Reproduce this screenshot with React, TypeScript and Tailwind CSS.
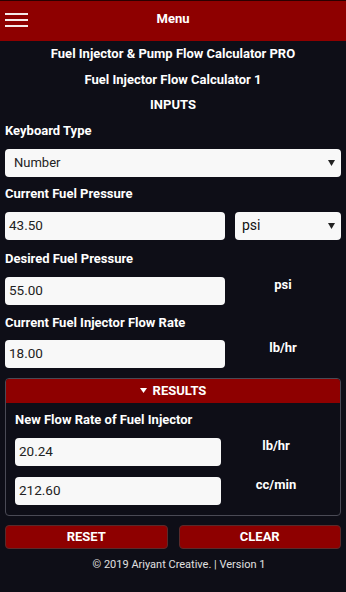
import React from 'react';

const font = { fontFamily: 'Roboto, "Liberation Sans", sans-serif' };

function Caret() {
  return (
    <svg width="7" height="6" viewBox="0 0 7 6" className="shrink-0">
      <path d="M0 0 L7 0 L3.5 6 Z" fill="#222" />
    </svg>
  );
}

function Field({ value, className = '' }: { value: string; className?: string }) {
  return (
    <div className={`flex h-[28px] items-center rounded-[4px] bg-[#f8f8f8] px-[4px] text-[13.5px] text-[#222] ${className}`}>
      {value}
    </div>
  );
}

function Label({ children, className = '' }: { children: React.ReactNode; className?: string }) {
  return <div className={`text-[13px] font-bold leading-none text-white ${className}`}>{children}</div>;
}

function Unit({ children }: { children: React.ReactNode }) {
  return <div className="-mt-[1px] flex-1 text-center text-[13px] font-bold leading-[18px]">{children}</div>;
}

export default function App() {
  return (
    <div style={font} className="flex h-[592px] w-[346px] flex-col overflow-hidden bg-[#0e0e17] text-white">
      <div className="relative flex h-[41px] items-center justify-center border-t border-[#2a0000] bg-[#8e0000]">
        <div className="absolute left-[5px] top-[12px] flex w-[23px] flex-col gap-[4px]">
          <span className="h-[2px] bg-[#f5eaea]" />
          <span className="h-[2px] bg-[#f5eaea]" />
          <span className="h-[2px] bg-[#f5eaea]" />
        </div>
        <span className="pb-[4px] text-[13px] font-bold">Menu</span>
      </div>

      <div className="mt-0 flex flex-col items-center text-[13px] font-bold leading-[25.5px]">
        <div>Fuel Injector &amp; Pump Flow Calculator PRO</div>
        <div>Fuel Injector Flow Calculator 1</div>
        <div>INPUTS</div>
      </div>

      <div className="px-[5px]">
        <Label className="mt-[6px]">Keyboard Type</Label>
        <div className="mt-[12px] flex h-[28px] items-center justify-between rounded-[4px] bg-[#f8f8f8] pl-[9px] pr-[6px] text-[13px] text-[#222]">
          <span>Number</span>
          <Caret />
        </div>

        <Label className="mt-[10px]">Current Fuel Pressure</Label>
        <div className="mt-[12px] flex gap-[10px]">
          <Field value="43.50" className="w-[220px]" />
          <div className="flex h-[28px] flex-1 items-center justify-between rounded-[4px] bg-[#f8f8f8] pl-[7px] pr-[6px] text-[14px] text-[#111]">
            <span>psi</span>
            <Caret />
          </div>
        </div>

        <Label className="mt-[12px]">Desired Fuel Pressure</Label>
        <div className="mt-[12px] flex">
          <Field value="55.00" className="w-[220px]" />
          <Unit>psi</Unit>
        </div>

        <Label className="mt-[11px]">Current Fuel Injector Flow Rate</Label>
        <div className="mt-[11px] flex">
          <Field value="18.00" className="w-[220px]" />
          <Unit>lb/hr</Unit>
        </div>

        <div className="mt-[10px] overflow-hidden rounded-[4px] border border-[#4a4a55]">
          <div className="flex h-[24px] items-center justify-center gap-[6px] bg-[#8e0000] text-[13px] font-bold">
            <svg width="7" height="5" viewBox="0 0 7 5">
              <path d="M0 0 L7 0 L3.5 5 Z" fill="#fff" />
            </svg>
            RESULTS
          </div>
          <div className="px-[9px] pb-[10px]">
            <Label className="mt-[10px]">New Flow Rate of Fuel Injector</Label>
            <div className="mt-[12px] flex">
              <Field value="20.24" className="w-[206px]" />
              <Unit>lb/hr</Unit>
            </div>
            <div className="mt-[11px] flex">
              <Field value="212.60" className="w-[206px]" />
              <Unit>cc/min</Unit>
            </div>
          </div>
        </div>

        <div className="mt-[9px] flex gap-[11px]">
          <div className="flex h-[24px] flex-1 items-center justify-center rounded-[4px] border border-[#5a2a2a] bg-[#8e0000] text-[13px] font-bold">RESET</div>
          <div className="flex h-[24px] flex-1 items-center justify-center rounded-[4px] border border-[#5a2a2a] bg-[#8e0000] text-[13px] font-bold">CLEAR</div>
        </div>

        <div className="mt-[8px] pl-[12px] text-center text-[11px] text-[#e0e0e0]">© 2019 Ariyant Creative. | Version 1</div>
      </div>
    </div>
  );
}
